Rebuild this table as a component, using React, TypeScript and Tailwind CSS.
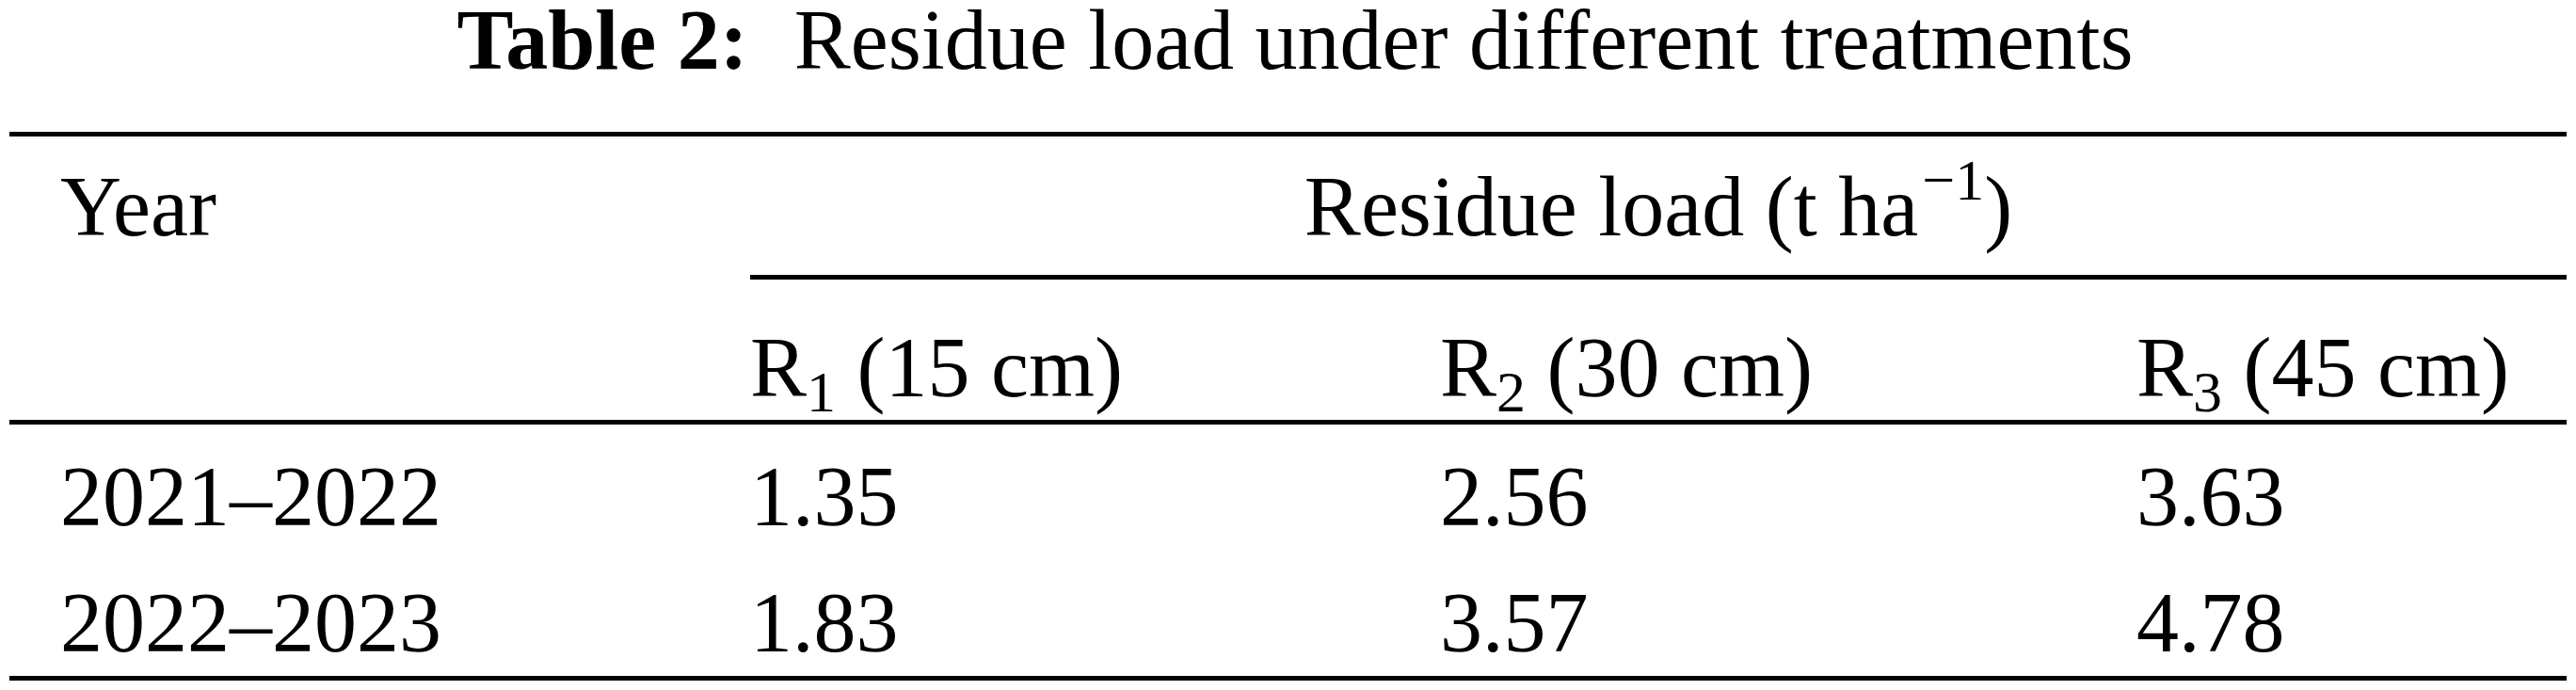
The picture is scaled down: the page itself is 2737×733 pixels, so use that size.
import React from "react";

function Sub({ children }: { children: React.ReactNode }) {
  return <span className="text-[62px] leading-[0] align-[-16px]">{children}</span>;
}

function R({ n, cm }: { n: string; cm: string }) {
  return (
    <div className="whitespace-nowrap">
      R<Sub>{n}</Sub> ({cm} cm)
    </div>
  );
}

const rows = [
  ["2021–2022", "1.35", "2.56", "3.63"],
  ["2022–2023", "1.83", "3.57", "4.78"],
];

export default function App() {
  return (
    <div className="w-[2737px] h-[733px] bg-white text-black font-['Liberation_Serif','Times_New_Roman',serif] text-[90px] overflow-hidden">
      <div className="h-[140px] leading-[85px] text-center whitespace-nowrap pl-[15px]">
        <span className="font-bold">Table 2:</span>
        <span className="ml-[49px]">Residue load under different treatments</span>
      </div>
      <div className="mx-[10px] border-t-[5px] border-b-[5px] border-black">
        <div className="grid grid-cols-[787px_1fr] border-b-[5px] border-black">
          <div className="pl-[54px] pt-[30px] leading-[90px]">Year</div>
          <div>
            <div className="pt-[30px] pb-[27px] leading-[90px] text-center whitespace-nowrap border-b-[5px] border-black">
              Residue load (t ha
              <span className="ml-[4px] text-[62px] leading-[0] align-[38px]">−1</span>)
            </div>
            <div className="grid grid-cols-[733px_740px_1fr] pt-[49px] pb-[10px] leading-[90px]">
              <R n="1" cm="15" />
              <R n="2" cm="30" />
              <R n="3" cm="45" />
            </div>
          </div>
        </div>
        <div className="pt-[32px] pb-[11px] flex flex-col gap-[44px]">
          {rows.map((r) => (
            <div key={r[0]} className="grid grid-cols-[787px_733px_740px_1fr] leading-[90px]">
              <div className="pl-[54px]">{r[0]}</div>
              <div>{r[1]}</div>
              <div>{r[2]}</div>
              <div>{r[3]}</div>
            </div>
          ))}
        </div>
      </div>
    </div>
  );
}
